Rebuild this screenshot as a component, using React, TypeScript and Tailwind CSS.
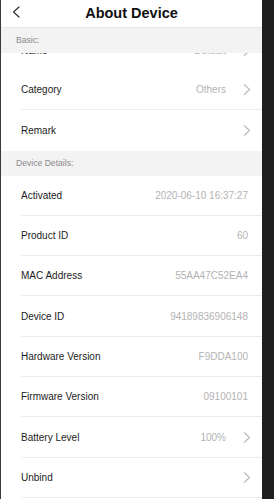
import React from "react";

type Row = { label: string; value?: string; arrow?: boolean };

const details: Row[] = [
  { label: "Activated", value: "2020-06-10 16:37:27" },
  { label: "Product ID", value: "60" },
  { label: "MAC Address", value: "55AA47C52EA4" },
  { label: "Device ID", value: "94189836906148" },
  { label: "Hardware Version", value: "F9DDA100" },
  { label: "Firmware Version", value: "09100101" },
  { label: "Battery Level", value: "100%", arrow: true },
  { label: "Unbind", arrow: true },
];

function Chevron() {
  return (
    <svg width="8" height="11" viewBox="0 0 8 11" className="shrink-0">
      <polyline
        points="1.5,0.8 6.5,5.5 1.5,10.2"
        fill="none"
        stroke="#bdbdbd"
        strokeWidth="1.3"
        strokeLinecap="round"
        strokeLinejoin="round"
      />
    </svg>
  );
}

function ListRow({ row, last }: { row: Row; last?: boolean }) {
  return (
    <div
      className={
        "ml-5 flex h-[40.3px] shrink-0 items-center pr-[11px] " +
        (last ? "" : "border-b border-[#ececec]")
      }
    >
      <span className="flex-1 text-[10px] text-[#1c1c1c]">{row.label}</span>
      {row.value && (
        <span
          className={
            "text-[10px] text-[#b3b3b3] " + (row.arrow ? "mr-[17px]" : "mr-[3px]")
          }
        >
          {row.value}
        </span>
      )}
      {row.arrow && <Chevron />}
    </div>
  );
}

function SectionHeader({ title }: { title: string }) {
  return (
    <div className="flex h-[25px] shrink-0 items-center bg-[#f3f3f3] pl-[15px] text-[8.6px] text-[#8a8a8a]">
      {title}
    </div>
  );
}

export default function App() {
  return (
    <div
      className="flex h-[499px] w-[274px] overflow-hidden bg-[#1e1e1e]"
      style={{ fontFamily: '"Liberation Sans", Arial, sans-serif' }}
    >
      <div className="flex w-[262px] flex-col overflow-hidden border-l border-[#3a3a3a] bg-white">
        <div className="relative flex h-[28px] shrink-0 items-center justify-center border-b border-[#e6e6e6]">
          <svg
            width="10"
            height="12"
            viewBox="0 0 10 12"
            className="absolute left-[10px] top-[6px]"
          >
            <polyline
              points="8,1 2.5,6 8,11"
              fill="none"
              stroke="#333"
              strokeWidth="1.2"
              strokeLinecap="round"
              strokeLinejoin="round"
            />
          </svg>
          <span className="text-[14.5px] font-bold text-[#111]">About Device</span>
        </div>

        <SectionHeader title="Basic:" />
        {/* list scrolled under the sticky "Basic:" header, only the tail of the Name row shows */}
        <div className="h-[17px] shrink-0 overflow-hidden">
          <div className="-mt-[22.3px]">
            <ListRow row={{ label: "Name", value: "Default", arrow: true }} />
          </div>
        </div>
        <ListRow row={{ label: "Category", value: "Others", arrow: true }} />
        <ListRow row={{ label: "Remark", arrow: true }} last />

        <SectionHeader title="Device Details:" />
        {details.map((r) => (
          <ListRow key={r.label} row={r} />
        ))}
      </div>
      <div className="flex-1" />
    </div>
  );
}
